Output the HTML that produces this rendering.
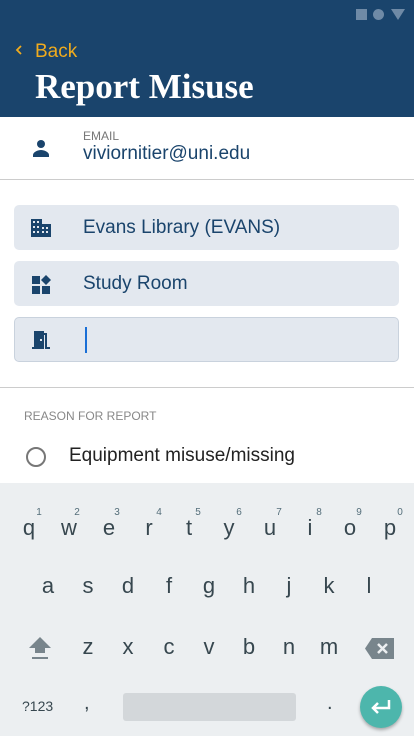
<!DOCTYPE html>
<html><head><meta charset="utf-8"><style>
*{margin:0;padding:0;box-sizing:border-box}
body{width:414px;height:736px;position:relative;overflow:hidden;background:#fff;font-family:"Liberation Sans",sans-serif}
.a{position:absolute}
.hdr{left:0;top:0;width:414px;height:117px;background:#1a446c}
.field{left:14px;width:385px;height:45px;background:#e3e8ef;border-radius:5px;color:#1a446c;font-size:19px;line-height:45px;padding-left:69px}
.kb{left:0;top:483px;width:414px;height:253px;background:#eceff1}
.k{position:absolute;width:30px;text-align:center;font-size:22px;color:#37474f;transform:translateX(-15px)}
.n{position:absolute;font-size:10px;color:#546e7a;transform:translateX(-50%)}
</style></head><body>
<div class="a hdr"></div>
<div class="a" style="left:356px;top:9px;width:11px;height:11px;background:#6f8aa6"></div>
<div class="a" style="left:373px;top:9px;width:11px;height:11px;border-radius:50%;background:#6f8aa6"></div>
<svg class="a" style="left:391px;top:9px" width="14" height="11"><polygon points="0,0 14,0 7,11" fill="#6f8aa6"/></svg>
<svg class="a" style="left:15px;top:45px" width="8" height="10"><polyline points="6,1 2,5 6,9" fill="none" stroke="#f0ab1e" stroke-width="1.8"/></svg>
<div class="a" style="left:35px;top:41px;color:#f0ab1e;font-size:19px">Back</div>
<div class="a" style="left:35px;top:67px;color:#fff;font-family:'Liberation Serif',serif;font-weight:bold;font-size:35px">Report Misuse</div>

<svg class="a" style="left:32px;top:139px" width="18" height="18" viewBox="0 0 18 18"><circle cx="9" cy="5" r="4" fill="#1a446c"/><path d="M1 18v-2c0-3 5-5 8-5s8 2 8 5v2z" fill="#1a446c"/></svg>
<div class="a" style="left:83px;top:129px;font-size:12px;color:#777">EMAIL</div>
<div class="a" style="left:83px;top:143px;font-size:19px;color:#1a446c">viviornitier@uni.edu</div>
<div class="a" style="left:0;top:179px;width:414px;height:1px;background:#ccc"></div>

<div class="a field" style="top:205px">Evans Library (EVANS)</div>
<svg class="a" style="left:31px;top:219px" width="20" height="18" viewBox="0 0 20 18"><path d="M0 0h11v5h9v13H0z" fill="#1a446c"/><g fill="#e3e8ef"><rect x="2" y="2" width="2" height="2"/><rect x="6" y="2" width="2" height="2"/><rect x="2" y="7" width="2" height="2"/><rect x="6" y="7" width="2" height="2"/><rect x="2" y="12" width="2" height="2"/><rect x="6" y="12" width="2" height="2"/><rect x="11" y="8" width="2" height="2"/><rect x="15" y="8" width="2" height="2"/><rect x="11" y="12" width="2" height="2"/><rect x="15" y="12" width="2" height="2"/></g></svg>
<div class="a field" style="top:261px">Study Room</div>
<svg class="a" style="left:32px;top:275px" width="19" height="19" viewBox="0 0 19 19"><rect x="0" y="1" width="8" height="8" fill="#1a446c"/><rect x="0" y="11" width="8" height="8" fill="#1a446c"/><rect x="10" y="11" width="8" height="8" fill="#1a446c"/><polygon points="14,0 19,5 14,10 9,5" fill="#1a446c"/></svg>
<div class="a field" style="top:317px;border:1px solid #c9d2dd"></div>
<svg class="a" style="left:32px;top:331px" width="18" height="18" viewBox="0 0 18 18"><path d="M2 0h10v18H0v-2h2z" fill="#1a446c"/><path d="M12 2h3v14h3v2h-5V4h-1z" fill="#1a446c"/><rect x="8" y="8" width="2" height="2" fill="#e3e8ef"/></svg>
<div class="a" style="left:85px;top:327px;width:2px;height:26px;background:#1a6fd6"></div>
<div class="a" style="left:0;top:387px;width:414px;height:1px;background:#ccc"></div>
<div class="a" style="left:24px;top:409px;font-size:12px;color:#888">REASON FOR REPORT</div>
<div class="a" style="left:26px;top:447px;width:20px;height:20px;border:2px solid #777;border-radius:50%"></div>
<div class="a" style="left:69px;top:445px;font-size:19px;color:#222">Equipment misuse/missing</div>

<div class="a kb"></div>
<div class="n" style="left:39px;top:507px">1</div><div class="n" style="left:77px;top:507px">2</div><div class="n" style="left:117px;top:507px">3</div><div class="n" style="left:159px;top:507px">4</div><div class="n" style="left:198px;top:507px">5</div><div class="n" style="left:239px;top:507px">6</div><div class="n" style="left:279px;top:507px">7</div><div class="n" style="left:319px;top:507px">8</div><div class="n" style="left:359px;top:507px">9</div><div class="n" style="left:400px;top:507px">0</div>
<div class="k" style="left:29px;top:515px">q</div><div class="k" style="left:69px;top:515px">w</div><div class="k" style="left:109px;top:515px">e</div><div class="k" style="left:149px;top:515px">r</div><div class="k" style="left:189px;top:515px">t</div><div class="k" style="left:229px;top:515px">y</div><div class="k" style="left:270px;top:515px">u</div><div class="k" style="left:310px;top:515px">i</div><div class="k" style="left:350px;top:515px">o</div><div class="k" style="left:390px;top:515px">p</div>
<div class="k" style="left:48px;top:573px">a</div><div class="k" style="left:88px;top:573px">s</div><div class="k" style="left:128px;top:573px">d</div><div class="k" style="left:169px;top:573px">f</div><div class="k" style="left:209px;top:573px">g</div><div class="k" style="left:249px;top:573px">h</div><div class="k" style="left:289px;top:573px">j</div><div class="k" style="left:329px;top:573px">k</div><div class="k" style="left:369px;top:573px">l</div>
<svg class="a" style="left:29px;top:637px" width="22" height="23" viewBox="0 0 22 23"><polygon points="11,0 22,11 16,11 16,16 6,16 6,11 0,11" fill="#78858c"/><rect x="3" y="20" width="16" height="2" fill="#78858c"/></svg>
<div class="k" style="left:88px;top:634px">z</div><div class="k" style="left:128px;top:634px">x</div><div class="k" style="left:169px;top:634px">c</div><div class="k" style="left:209px;top:634px">v</div><div class="k" style="left:249px;top:634px">b</div><div class="k" style="left:289px;top:634px">n</div><div class="k" style="left:329px;top:634px">m</div>
<svg class="a" style="left:365px;top:638px" width="29" height="21" viewBox="0 0 29 21"><path d="M7 0h22v21H7L0 10.5z" fill="#78858c"/><path d="M13 6l9 9M22 6l-9 9" stroke="#eceff1" stroke-width="2.5"/></svg>
<div class="a" style="left:22px;top:698px;font-size:14px;color:#37474f">?123</div>
<div class="a" style="left:84px;top:692px;font-size:20px;color:#37474f">,</div>
<div class="a" style="left:123px;top:693px;width:173px;height:28px;background:#d3d7da;border-radius:3px"></div>
<div class="a" style="left:327px;top:692px;font-size:20px;color:#37474f">.</div>
<div class="a" style="left:360px;top:686px;width:42px;height:42px;border-radius:50%;background:#4db6ac;box-shadow:0 2px 3px rgba(0,0,0,.3)"></div>
<svg class="a" style="left:369px;top:697px" width="24" height="20" viewBox="0 0 24 20"><path d="M20 3v8H5" fill="none" stroke="#fff" stroke-width="2.5"/><polyline points="9,6 4,11 9,16" fill="none" stroke="#fff" stroke-width="2.5"/></svg>
</body></html>
